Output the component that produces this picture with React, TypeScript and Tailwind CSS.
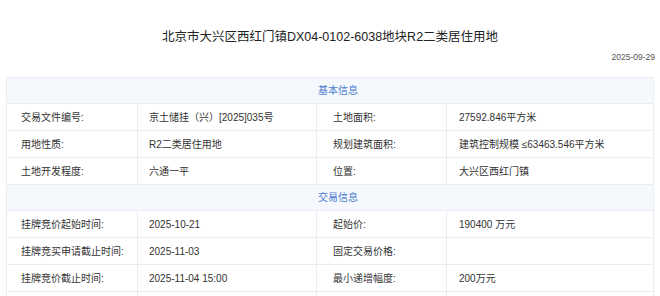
import React from "react";

const font = { fontFamily: '"Liberation Sans", "Noto Sans CJK SC", sans-serif' };

type Row = [string, string, string, string];

const basic: Row[] = [
  ["交易文件编号:", "京土储挂（兴）[2025]035号", "土地面积:", "27592.846平方米"],
  ["用地性质:", "R2二类居住用地", "规划建筑面积:", "建筑控制规模 ≤63463.546平方米"],
  ["土地开发程度:", "六通一平", "位置:", "大兴区西红门镇"],
];

const trade: Row[] = [
  ["挂牌竞价起始时间:", "2025-10-21", "起始价:", "190400 万元"],
  ["挂牌竞买申请截止时间:", "2025-11-03", "固定交易价格:", ""],
  ["挂牌竞价截止时间:", "2025-11-04 15:00", "最小递增幅度:", "200万元"],
  ["", "", "", ""],
];

function Header({ text }: { text: string }) {
  return (
    <div className="h-[26px] flex items-center justify-center pl-[16px] bg-[#f5f8fc] border-b border-[#e9edf2] text-[10px] text-[#4a7bcf]">
      {text}
    </div>
  );
}

function DataRow({ r }: { r: Row }) {
  return (
    <div className="grid grid-cols-[131px_179px_130px_207px] h-[27px] border-b border-[#e9edf2] text-[10px] text-[#333]">
      <div className="flex items-center pl-[14px] border-r border-[#e9edf2] whitespace-nowrap">{r[0]}</div>
      <div className="flex items-center pl-[11px] border-r border-[#e9edf2] whitespace-nowrap">{r[1]}</div>
      <div className="flex items-center pl-[16px] border-r border-[#e9edf2] whitespace-nowrap">{r[2]}</div>
      <div className="flex items-center pl-[12px] whitespace-nowrap">{r[3]}</div>
    </div>
  );
}

export default function App() {
  return (
    <div className="w-[660px] h-[296px] overflow-hidden bg-white" style={font}>
      <div className="pt-[28px] text-center text-[12.5px] leading-[18px] text-[#222]">
        北京市大兴区西红门镇DX04-0102-6038地块R2二类居住用地
      </div>
      <div className="mt-[5px] pr-[5px] text-right text-[8.5px] leading-[12px] text-[#555]">
        2025-09-29
      </div>
      <div className="mt-[14px] mx-[6px] border-t border-x border-[#e9edf2]">
        <Header text="基本信息" />
        {basic.map((r, i) => (
          <DataRow key={i} r={r} />
        ))}
        <Header text="交易信息" />
        {trade.map((r, i) => (
          <DataRow key={i} r={r} />
        ))}
      </div>
    </div>
  );
}
